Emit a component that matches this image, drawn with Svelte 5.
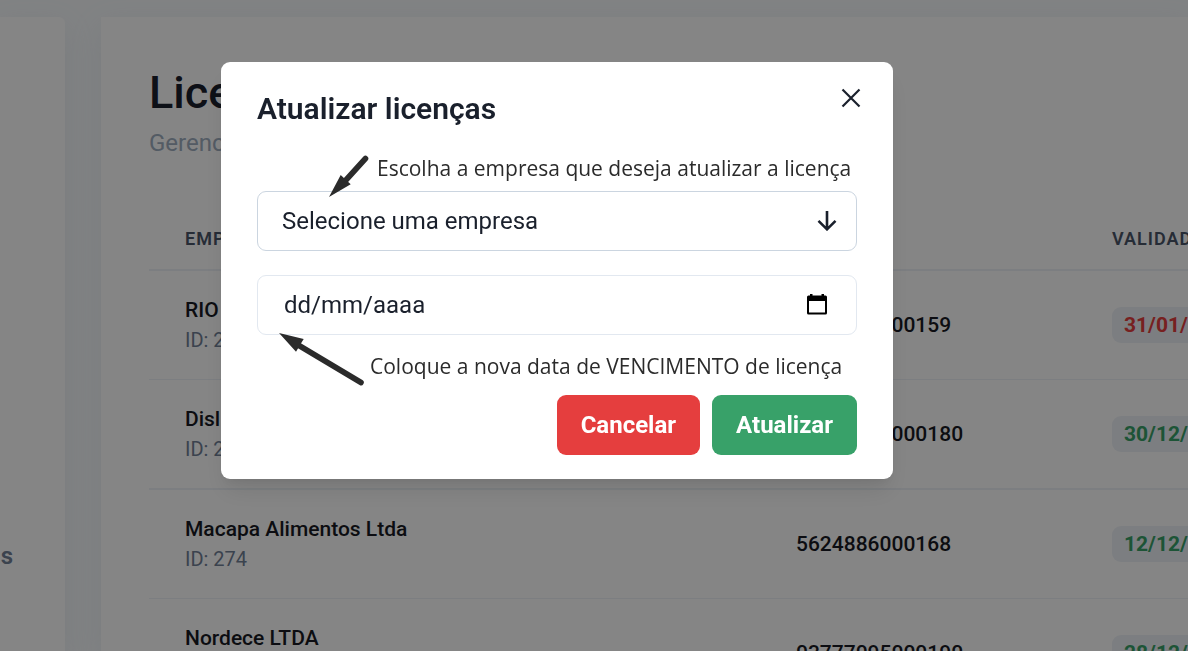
<script>
  const rows = [
    { name: 'RIO Alimentos', id: 276, cnpj: '3624886000159', date: '31/01/2023', expired: true },
    { name: 'Disl Comercial', id: 275, cnpj: '07624886000180', date: '30/12/2023', expired: false },
    { name: 'Macapa Alimentos Ltda', id: 274, cnpj: '5624886000168', date: '12/12/2023', expired: false },
    { name: 'Nordece LTDA', id: 273, cnpj: '03777095000190', date: '28/12/2023', expired: false }
  ];
  let company = '';
  let dueDate = '';
</script>

<div class="page">
  <aside class="sidebar"><a href="#s">s</a></aside>
  <main class="card">
    <h1>Licenças</h1>
    <p class="subtitle">Gerencie</p>
    <table>
      <colgroup><col class="c-name" /><col class="c-cnpj" /><col /></colgroup>
      <thead>
        <tr><th>Empresa</th><th>CNPJ</th><th>Validade</th></tr>
      </thead>
      <tbody>
        {#each rows as row}
          <tr>
            <td><span class="name">{row.name}</span><span class="id">ID: {row.id}</span></td>
            <td>{row.cnpj}</td>
            <td><span class="badge" class:expired={row.expired}>{row.date}</span></td>
          </tr>
        {/each}
      </tbody>
    </table>
  </main>
</div>

<div class="overlay">
  <div class="modal" role="dialog" aria-modal="true" aria-labelledby="modal-title">
    <header>
      <h2 id="modal-title">Atualizar licenças</h2>
      <button class="close" type="button" aria-label="Fechar">
        <svg viewBox="0 0 20 20" width="20" height="20"><path d="M1.5 1.5 18.500 18.500M18.500 1.500 1.500 18.500" fill="none" stroke="currentColor" stroke-width="2.200" /></svg>
      </button>
    </header>
    <form>
      <label class="hint top" for="company">Escolha a empresa que deseja atualizar a licença</label>
      <div class="field">
        <select id="company" bind:value={company}>
          <option value="">Selecione uma empresa</option>
        </select>
        <svg class="down" viewBox="0 0 20 20" width="20" height="20"><path d="M10 0V18M1.500 9.800 10 18.300 18.500 9.800" fill="none" stroke="currentColor" stroke-width="2.600" /></svg>
        <svg class="pointer first" viewBox="0 0 40 44" width="40" height="44">
          <path d="M36.500 4.500 17 26" stroke="#2b2b2b" stroke-width="5.600" stroke-linecap="round" />
          <path d="M0 43 11.700 21 16 25 21.700 30.300 Z" fill="#2b2b2b" />
        </svg>
      </div>
      <div class="field date">
        <input id="due" type="text" placeholder="dd/mm/aaaa" bind:value={dueDate} />
        <button class="calendar" type="button" aria-label="Abrir calendário">
          <svg viewBox="0 0 20 22" width="20" height="22"><path fill-rule="evenodd" d="M3 1h2.500v1.500h9V1H17v1.500h1.500Q20 2.500 20 4v16q0 1.500-1.500 1.500h-17Q0 21.500 0 20V4q0-1.500 1.500-1.500H3zM2 8v11.500h16V8z" /></svg>
        </button>
        <svg class="pointer second" viewBox="0 0 86 54" width="86" height="54">
          <path d="M82 50.500 20 13.500" stroke="#2b2b2b" stroke-width="5.600" stroke-linecap="round" />
          <path d="M0 1 24.700 7 21 13 17 19.700 Z" fill="#2b2b2b" />
        </svg>
      </div>
      <label class="hint bottom" for="due">Coloque a nova data de VENCIMENTO de licença</label>
      <footer>
        <button class="btn cancel" type="button">Cancelar</button>
        <button class="btn update" type="button">Atualizar</button>
      </footer>
    </form>
  </div>
</div>

<style>
  :global(body) { background: #f7fafc; }
  :global(#app) { font-family: Roboto, sans-serif; color: #1a202c; }
  * { box-sizing: border-box; }
  h1, h2, p { margin: 0; }
  button, input, select { font: inherit; color: inherit; }
  svg { display: block; }

  .page { display: flex; gap: 36px; height: 100vh; padding-top: 17px; overflow: hidden; }
  .sidebar, .card { background: #fff; box-shadow: 0 10px 30px rgba(160, 174, 192, 0.15); }
  .sidebar {
    display: flex; justify-content: flex-end; align-items: flex-start; flex: none;
    width: 65px; padding: 521px 52px 0 0; border-radius: 0 6px 0 0;
  }
  .sidebar a { color: #718096; font-size: 24px; line-height: 36px; font-weight: 600; text-decoration: none; }
  .card { flex: 1; min-width: 0; padding: 48px 0 0 48px; }
  h1 { font-size: 45px; line-height: 56px; font-weight: 500; }
  .subtitle { margin: 4px 0 48px; font-size: 24px; line-height: 36px; color: #a0aec0; }

  table { width: 100%; table-layout: fixed; border-collapse: separate; border-spacing: 0; }
  .c-name { width: 611px; }
  .c-cnpj { width: 316px; }
  th {
    padding: 18px 0 18px 36px; border-bottom: 2px solid #edf2f7; color: #4a5568; text-align: left;
    text-transform: uppercase; font-size: 18px; line-height: 24px; font-weight: 600; letter-spacing: 1px;
  }
  td {
    padding: 24px 0 24px 36px; border-bottom: 1px solid #edf2f7; white-space: nowrap;
    font-size: 21px; line-height: 30px; font-weight: 500; color: #171923;
  }
  tr:nth-child(even) td { border-bottom-width: 2px; }
  .name, .id { display: block; }
  .id { color: #718096; font-size: 20px; font-weight: 400; }
  .badge {
    display: inline-block; padding: 3px 12px; border-radius: 9px; background: #edf2f7;
    color: #38a169; font-weight: 700; vertical-align: middle;
  }
  .badge.expired { color: #e53e3e; }

  .overlay {
    position: fixed; inset: 0; display: flex; justify-content: center; align-items: flex-start;
    padding: 62px 74px 0 0; background: rgba(0, 0, 0, 0.48);
  }
  .modal {
    width: 672px; padding: 24px 36px; border-radius: 9px; background: #fff;
    box-shadow: 0 15px 23px -4px rgba(0, 0, 0, 0.1), 0 6px 9px -3px rgba(0, 0, 0, 0.05);
  }
  header { display: flex; justify-content: space-between; align-items: flex-start; }
  h2 { font-size: 30px; line-height: 45px; font-weight: 600; }
  .close { margin: 2px -4px 0 0; padding: 0; border: 0; background: none; }
  .hint { display: block; color: #2b2b2b; font: 400 21px/30px "Open Sans", sans-serif; }
  .hint.top { margin: 22px 0 8px; padding-left: 120px; }
  .hint.bottom { margin: 16px 0 14px; padding-left: 113px; }
  .field { position: relative; display: flex; }
  .field.date { margin-top: 24px; }
  select, input {
    width: 100%; height: 60px; padding: 0 60px 0 24px; border: 1px solid #cbd5e0; border-radius: 9px;
    background: #fff; appearance: none; font-size: 24px; outline: 0;
  }
  input { padding-left: 26px; border-color: #e2e8f0; }
  input::placeholder { color: #1a202c; opacity: 1; }
  .down { position: absolute; right: 20px; top: 20px; pointer-events: none; }
  .calendar { position: absolute; right: 30px; top: 18px; padding: 0; border: 0; background: none; color: #000; }
  .pointer { position: absolute; pointer-events: none; }
  .pointer.first { left: 72px; top: -37px; }
  .pointer.second { left: 22px; top: 57px; }
  footer { display: flex; justify-content: flex-end; gap: 12px; }
  .btn { height: 60px; padding: 0 24px; border: 0; border-radius: 9px; color: #fff; font-size: 24px; font-weight: 700; }
  .cancel { background: #e53e3e; }
  .update { background: #38a169; }
</style>
